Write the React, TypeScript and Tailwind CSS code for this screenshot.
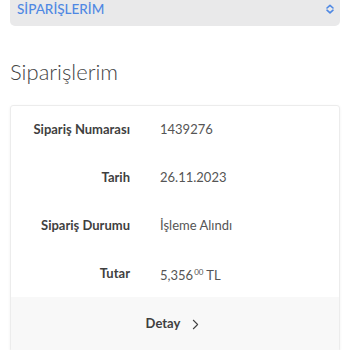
import { ChevronRight } from 'lucide-react';

const rows = [
  { label: 'Sipariş Numarası', value: <>1439276</> },
  { label: 'Tarih', value: <>26.11.2023</> },
  { label: 'Sipariş Durumu', value: <>İşleme Alındı</> },
  {
    label: 'Tutar',
    value: (
      <>
        5,356<span className="text-[8px] align-[5px] ml-[1px]">00</span> TL
      </>
    ),
  },
];

export default function App() {
  return (
    <div className="w-[350px] h-[350px] overflow-hidden bg-white font-['Lato',sans-serif]">
      <div className="mx-[10px] h-[27px] -mt-[1px] bg-[#e9e9ea] rounded-b-[5px] flex items-center justify-between pl-[7px] pr-[5px] pb-[7px]">
        <span className="text-[13.5px] leading-[16px] font-medium text-[#4f88e3]">SİPARİŞLERİM</span>
        <svg width="10" height="10" viewBox="0 0 10 10" fill="none" stroke="#4f88e3" strokeWidth="1.6" strokeLinecap="round" strokeLinejoin="round">
          <path d="M2 4 L5 1.3 L8 4" />
          <path d="M2 6.2 L5 8.9 L8 6.2" />
        </svg>
      </div>

      <h1 className="mt-[32px] ml-[10px] text-[22px] leading-[28px] font-light text-[#444]">Siparişlerim</h1>

      <div className="mt-[19px] mx-[10px] border border-[#ececec] rounded-[3px] shadow-[0_1px_3px_rgba(0,0,0,0.06)] overflow-hidden">
        <div className="pt-[15px] pb-[16px] flex flex-col gap-[32px]">
          {rows.map((r) => (
            <div key={r.label} className="h-[16px] flex items-center">
              <div className="w-[119px] text-right text-[13px] leading-[16px] font-bold text-[#3f3f3f]">{r.label}</div>
              <div className="ml-[30px] text-[13px] leading-[16px] text-[#555]">{r.value}</div>
            </div>
          ))}
        </div>
        <div className="h-[54px] bg-[#f8f8f8] flex items-center justify-center gap-[7px] text-[13px] font-bold text-[#3f3f3f]">
          Detay
          <ChevronRight size={17} strokeWidth={1.5} className="text-[#444]" />
        </div>
      </div>
    </div>
  );
}
